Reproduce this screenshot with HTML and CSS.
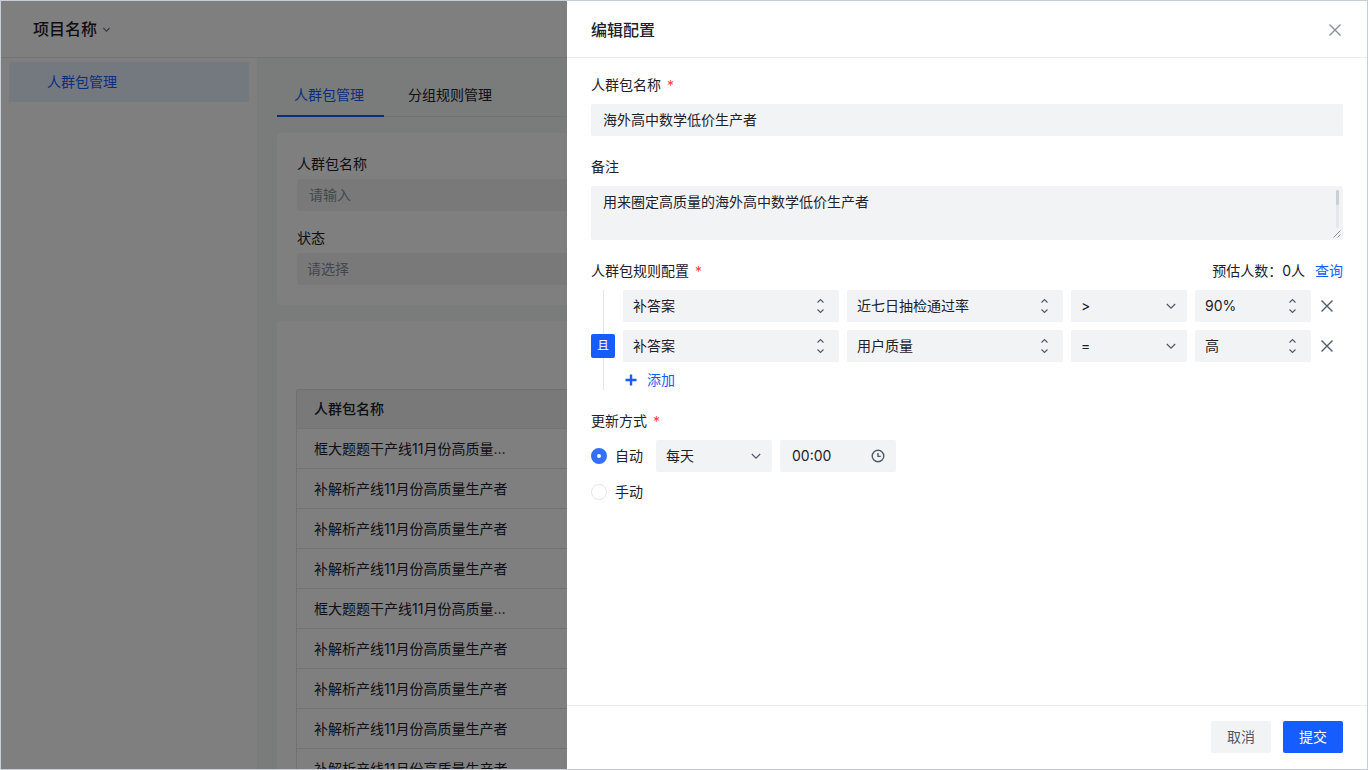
FILE: index.html
```html
<!DOCTYPE html>
<html lang="zh-CN">
<head>
<meta charset="utf-8">
<title>人群包管理</title>
<link rel="stylesheet" href="styles.css">
</head>
<body>
<svg class="sprite" aria-hidden="true">
  <symbol id="down" viewBox="0 0 12 12"><path d="M1.8 4 6 8.2 10.2 4"/></symbol>
  <symbol id="updown" viewBox="0 0 12 20"><path d="M2.5 6.5 5.5 3.5l3 3M2.5 13.5l3 3 3-3"/></symbol>
  <symbol id="cross" viewBox="0 0 16 16"><path d="M2.5 2.5l11 11M13.5 2.5l-11 11"/></symbol>
</svg>
<div class="app">
  <div class="page">
    <header class="topbar">
      <button class="project" type="button">项目名称 <svg class="icon project-icon"><use href="#down"/></svg></button>
    </header>
    <div class="columns">
      <nav class="sidebar"><a class="nav-item" href="#">人群包管理</a></nav>
      <main class="main">
        <div class="tabs">
          <button class="tab active" type="button">人群包管理</button>
          <button class="tab" type="button">分组规则管理</button>
        </div>
        <section class="card filters">
          <div class="filter">
            <label for="f-name">人群包名称</label>
            <input class="control text" id="f-name" type="text" placeholder="请输入">
          </div>
          <div class="filter">
            <label for="f-state">状态</label>
            <select class="control placeholder" id="f-state"><option>请选择</option></select>
          </div>
        </section>
        <section class="card list">
          <table class="table">
            <thead><tr><th>人群包名称</th></tr></thead>
            <tbody>
              <tr><td>框大题题干产线11月份高质量…</td></tr>
              <tr><td>补解析产线11月份高质量生产者</td></tr>
              <tr><td>补解析产线11月份高质量生产者</td></tr>
              <tr><td>补解析产线11月份高质量生产者</td></tr>
              <tr><td>框大题题干产线11月份高质量…</td></tr>
              <tr><td>补解析产线11月份高质量生产者</td></tr>
              <tr><td>补解析产线11月份高质量生产者</td></tr>
              <tr><td>补解析产线11月份高质量生产者</td></tr>
              <tr><td>补解析产线11月份高质量生产者</td></tr>
            </tbody>
          </table>
        </section>
      </main>
    </div>
  </div>
  <div class="mask"></div>
  <form class="drawer">
    <header class="drawer-head">
      <h1>编辑配置</h1>
      <button class="icon-btn muted" type="button" aria-label="关闭"><svg class="icon"><use href="#cross"/></svg></button>
    </header>
    <div class="drawer-body">
      <div class="field">
        <label class="label" for="name">人群包名称<span class="star">*</span></label>
        <input class="control text" id="name" type="text" value="海外高中数学低价生产者">
      </div>
      <div class="field">
        <label class="label" for="note">备注</label>
        <div class="note-box">
          <textarea class="control note" id="note">用来圈定高质量的海外高中数学低价生产者</textarea>
          <span class="scroll"><span class="thumb"></span></span>
          <svg class="grip" viewBox="0 0 8 8"><path d="M0.5 7.5l7-7M4.5 7.5l3-3"/></svg>
        </div>
      </div>
      <div class="field">
        <div class="label-row">
          <span class="label">人群包规则配置<span class="star">*</span></span>
          <span class="estimate">预估人数：0人 <a class="query" href="#">查询</a></span>
        </div>
        <div class="rules">
          <div class="relation"><button class="and" type="button">且</button></div>
          <div class="rule-list">
            <div class="rule">
              <span class="pick"><select class="control" aria-label="指标来源"><option>补答案</option></select><svg class="icon tall"><use href="#updown"/></svg></span>
              <span class="pick"><select class="control" aria-label="指标"><option>近七日抽检通过率</option></select><svg class="icon tall"><use href="#updown"/></svg></span>
              <span class="pick"><select class="control" aria-label="条件"><option>&gt;</option></select><svg class="icon arrow"><use href="#down"/></svg></span>
              <span class="pick"><select class="control" aria-label="数值"><option>90%</option></select><svg class="icon tall"><use href="#updown"/></svg></span>
              <button class="icon-btn" type="button" aria-label="删除"><svg class="icon"><use href="#cross"/></svg></button>
            </div>
            <div class="rule">
              <span class="pick"><select class="control" aria-label="指标来源"><option>补答案</option></select><svg class="icon tall"><use href="#updown"/></svg></span>
              <span class="pick"><select class="control" aria-label="指标"><option>用户质量</option></select><svg class="icon tall"><use href="#updown"/></svg></span>
              <span class="pick"><select class="control" aria-label="条件"><option>=</option></select><svg class="icon arrow"><use href="#down"/></svg></span>
              <span class="pick"><select class="control" aria-label="数值"><option>高</option></select><svg class="icon tall"><use href="#updown"/></svg></span>
              <button class="icon-btn" type="button" aria-label="删除"><svg class="icon"><use href="#cross"/></svg></button>
            </div>
            <button class="add" type="button"><svg class="plus" viewBox="0 0 16 16"><path d="M8 2.5v11M2.5 8h11"/></svg>添加</button>
          </div>
        </div>
      </div>
      <div class="field">
        <span class="label">更新方式<span class="star">*</span></span>
        <div class="modes">
          <div class="mode">
            <label class="choice"><input class="radio" type="radio" name="mode" checked>自动</label>
            <div class="schedule">
              <span class="pick"><select class="control" aria-label="频率"><option>每天</option></select><svg class="icon arrow"><use href="#down"/></svg></span>
              <span class="pick"><input class="control text" type="text" value="00:00" aria-label="时间"><svg class="clock" viewBox="0 0 14 14"><circle cx="7" cy="7" r="5.8"/><path d="M7 4v3.4h2.8"/></svg></span>
            </div>
          </div>
          <div class="mode"><label class="choice"><input class="radio" type="radio" name="mode">手动</label></div>
        </div>
      </div>
    </div>
    <footer class="drawer-foot">
      <button class="btn" type="button">取消</button>
      <button class="btn primary" type="submit">提交</button>
    </footer>
  </form>
</div>
</body>
</html>
```

FILE: styles.css
```css
* { box-sizing: border-box; }
body {
  margin: 0;
  font: 14px/22px Inter, "Noto Sans CJK SC", sans-serif;
  color: #1d2129;
}
button, input, select, textarea { font: inherit; color: inherit; margin: 0; }
button { border: 0; padding: 0; background: none; cursor: pointer; }
a { text-decoration: none; }
.sprite { position: absolute; width: 0; height: 0; }
.icon, .plus, .grip, .clock { fill: none; stroke: currentColor; }
.icon { width: 16px; height: 16px; }

.app {
  position: relative;
  height: 100vh;
  overflow: hidden;
  border: 1px solid #c9cdd4;
}
.page { display: flex; flex-direction: column; height: 100%; background: #fff; }
.topbar { padding: 16px 32px; border-bottom: 1px solid #e5e6eb; }
.project {
  display: flex;
  align-items: center;
  gap: 5px;
  font-size: 16px;
  line-height: 24px;
  font-weight: 500;
}
.project-icon { width: 9px; height: 9px; color: #6b7785; stroke-width: 1.5; }
.columns { display: flex; flex: 1; min-height: 0; }
.sidebar { width: 256px; flex: none; padding: 4px 8px; }
.nav-item {
  display: block;
  padding-left: 38px;
  line-height: 40px;
  color: #165dff;
  background: #e8f0ff;
}
.main { flex: 1; min-width: 0; padding: 16px 20px; overflow: hidden; background: #f4f9f7; }
.tabs { display: flex; gap: 7px; box-shadow: inset 0 -1px #e5e6eb; }
.tab { padding: 0 17px; line-height: 41px; border-bottom: 2px solid transparent; }
.tab.active { padding-right: 20px; color: #165dff; border-color: #165dff; }
.card { margin-top: 16px; background: #fff; border-radius: 4px; }
.filters { display: grid; gap: 16px; padding: 20px; }
.filter { display: grid; gap: 4px; }
.list { padding: 68px 19px 20px; }
.table {
  width: 100%;
  border-spacing: 0;
  border: 1px solid #e0e2e8;
  border-radius: 2px;
}
.table th, .table td {
  height: 40px;
  padding: 0 17px;
  text-align: left;
  border-bottom: 1px solid #e5e6eb;
}
.table th { height: 39px; font-weight: 500; background: #f2f3f5; }

.control {
  display: block;
  width: 100%;
  height: 32px;
  padding: 0 10px;
  border: 0;
  border-radius: 2px;
  outline: 0;
  appearance: none;
  background: #f2f3f5;
}
.control.text { padding: 0 12px 2px; }
.control::placeholder, .placeholder { color: #86909c; opacity: 1; }

.mask { position: absolute; inset: 0; background: rgba(0, 0, 0, 0.5); }
.drawer {
  position: absolute;
  top: 0;
  right: 0;
  bottom: 0;
  width: 800px;
  max-width: 100%;
  display: flex;
  flex-direction: column;
  background: #fff;
}
.drawer-head {
  display: flex;
  align-items: center;
  justify-content: space-between;
  padding: 17px 24px 15px;
  border-bottom: 1px solid #ebecef;
}
.drawer-head h1 { margin: 0; font-size: 16px; line-height: 24px; font-weight: 500; }
.icon-btn { display: flex; align-items: center; color: #4e5969; }
.icon-btn.muted { color: #86909c; }
.icon-btn .icon { stroke-width: 1.4; }
.drawer-body {
  flex: 1;
  min-height: 0;
  display: flex;
  flex-direction: column;
  gap: 20px;
  padding: 16px 24px;
}
.field { display: grid; gap: 8px; }
.star { margin-left: 6px; line-height: 1; vertical-align: middle; color: #f53f3f; }
.note-box { position: relative; }
.note { height: 54px; padding: 5px 12px; resize: none; }
.scroll {
  position: absolute;
  top: 4px;
  right: 4px;
  width: 3px;
  height: 38px;
  border-radius: 2px;
  background: #e5e6eb;
}
.thumb { display: block; height: 15px; border-radius: 2px; background: #c9cdd4; }
.grip { position: absolute; right: 2px; bottom: 2px; width: 8px; height: 8px; color: #86909c; }
.label-row { display: flex; justify-content: space-between; }
.estimate { display: flex; gap: 10px; }
.query { color: #165dff; }

.rules { display: flex; gap: 8px; }
.relation {
  display: flex;
  align-items: center;
  width: 24px;
  padding-top: 12px;
  background: linear-gradient(#e5e6eb, #e5e6eb) center / 1px 100% no-repeat;
}
.and {
  width: 24px;
  height: 24px;
  font-size: 12px;
  color: #fff;
  border-radius: 2px;
  background: #165dff;
}
.rule-list { flex: 1; display: grid; gap: 8px; }
.rule {
  display: grid;
  grid-template-columns: 216fr 216fr 116fr 116fr 24px;
  gap: 8px;
}
.pick { position: relative; display: block; min-width: 0; }
.pick svg { position: absolute; top: 50%; transform: translateY(-50%); pointer-events: none; color: #4e5969; }
.pick .tall { right: 12px; width: 12px; height: 20px; stroke-width: 1.1; }
.pick .arrow { right: 10px; width: 12px; height: 12px; stroke-width: 1.2; }
.pick .clock { right: 11px; width: 14px; height: 14px; stroke-width: 1.4; }
.add {
  display: flex;
  align-items: center;
  gap: 8px;
  justify-self: start;
  line-height: 20px;
  color: #165dff;
}
.plus { width: 16px; height: 16px; stroke-width: 2.4; }

.modes { display: grid; gap: 4px; }
.mode { display: flex; gap: 13px; min-height: 32px; }
.choice { display: flex; align-items: center; gap: 8px; }
.radio {
  appearance: none;
  width: 16px;
  height: 16px;
  border: 1px solid #e5e6eb;
  border-radius: 50%;
  background: #fff;
}
.radio:checked { border: 6px solid #3370ff; }
.schedule { display: grid; grid-template-columns: 116px 116px; gap: 8px; }

.drawer-foot {
  display: flex;
  justify-content: flex-end;
  gap: 12px;
  padding: 15px 24px 16px;
  border-top: 1px solid #ebecef;
}
.btn {
  padding: 0 16px;
  line-height: 32px;
  border-radius: 2px;
  color: #4e5969;
  background: #f2f3f5;
}
.btn.primary { color: #fff; background: #165dff; }
```
